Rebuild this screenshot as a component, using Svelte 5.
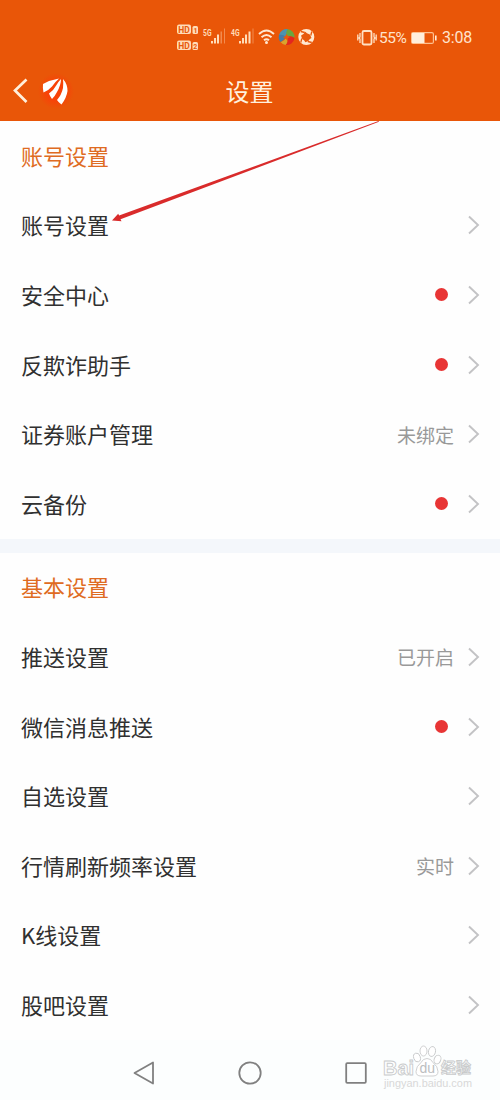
<script lang="ts">
    interface Row {
        label: string;
        value?: string;
        dot?: boolean;
    }

    interface Section {
        title: string;
        rows: Row[];
    }

    const sections: Section[] = [
        {
            title: "账号设置",
            rows: [
                { label: "账号设置" },
                { label: "安全中心", dot: true },
                { label: "反欺诈助手", dot: true },
                { label: "证券账户管理", value: "未绑定" },
                { label: "云备份", dot: true },
            ],
        },
        {
            title: "基本设置",
            rows: [
                { label: "推送设置", value: "已开启" },
                { label: "微信消息推送", dot: true },
                { label: "自选设置" },
                { label: "行情刷新频率设置", value: "实时" },
                { label: "K线设置" },
                { label: "股吧设置" },
            ],
        },
    ];
</script>

<div class="screen">
    <header>
        <div class="status">
            <svg class="signals" width="150" height="34" viewBox="0 0 150 34">
                <g fill="#ffdcb8">
                    <rect x="2" y="4.500" width="14" height="9.500" rx="2" />
                    <rect x="2" y="20.500" width="14" height="9.500" rx="2" />
                    <rect x="17.500" y="6" width="5.500" height="8" rx="1.500" />
                    <rect x="17.500" y="22" width="5.500" height="8" rx="1.500" />
                    <text x="28" y="15.500" font-size="9" textLength="8.500" lengthAdjust="spacingAndGlyphs">5G</text>
                    <text x="56" y="15.500" font-size="9" textLength="8.500" lengthAdjust="spacingAndGlyphs">4G</text>
                    <path d="M36 21h2v2.500h-2zM39 18h2v5.500h-2zM42 14.500h2v9h-2zM64 21h2v2.500h-2zM67 18h2v5.500h-2zM70 14.500h2v9h-2zM73.500 11.500h2v12h-2z" />
                    <path opacity=".4" d="M45.500 11.500h1.500v12h-1.500zM49 8.500h1v15h-1zM77.500 8.500h1v15h-1z" />
                </g>
                <g fill="#e8590c">
                    <text x="3.200" y="12.500" font-size="9" textLength="11.500" lengthAdjust="spacingAndGlyphs">HD</text>
                    <text x="3.200" y="28.500" font-size="9" textLength="11.500" lengthAdjust="spacingAndGlyphs">HD</text>
                    <text x="18.500" y="12.600" font-size="7">1</text>
                    <text x="18.300" y="28.600" font-size="7">2</text>
                </g>
                <g fill="none" stroke="#ffe8d2" stroke-width="1.900">
                    <path d="M84 14q7.500-7 15 0M86.500 17.300q5-4.600 10 0M89 20.300q2.500-2.200 5 0" />
                </g>
                <circle cx="91.500" cy="22.500" r="1.500" fill="#ffe8d2" />
                <g transform="translate(111.500 17)">
                    <path fill="#4a93b0" d="M0 0 -7.500-2A8 8 0 0 1 1-8Q4-4 0 0" />
                    <path fill="#6aa63f" d="M0 0Q-1-5 1-8A8 8 0 0 1 8 1Q4-2 0 0" />
                    <path fill="#e32620" d="M0 0Q5-2 8 1A8 8 0 0 1-1 8Q3 4 0 0" />
                    <path fill="#d9a42e" d="M0 0Q2 5-1 8A8 8 0 0 1-6 5Q-2 4 0 0" />
                    <path fill="#447ca8" d="M0 0Q-4 4-6 5A8 8 0 0 1-7.500-2Q-4-3 0 0" />
                    <path fill="#e8590c" d="M0-3Q1.500 0 3.500 0 1 1 .5 3 -1 1-3.500.5-1-.5 0-3" />
                </g>
                <g transform="translate(131.300 17)">
                    <circle r="8" fill="#ffe9d2" />
                    <path fill="#e8590c" d="M-1-5.200Q0-3.500 3.500-2.500Q4.500-1 5.200 1Q3.500 1.500 2 4Q0 5 -1 5.300Q-1.500 3.500-4 2Q-5-.5-5.200-1.500Q-3-2-1-5.200" />
                    <path fill="none" stroke="#e8590c" stroke-width="1.300" d="M-1.500-4.500-5.500-5.500M4.500-1.500 5.500-5.500M1.500 4.500 5.500 5.500M-4.500 1.500-5.500 5.500" />
                </g>
            </svg>
            <div class="power">
                <svg width="20" height="18" viewBox="0 0 20 18" fill="none" stroke="#ffe1c4">
                    <rect x="5.500" y="2" width="9" height="13.500" rx="1.500" stroke-width="1.800" />
                    <path stroke-width="1.300" d="M3 4v4l-1 1 1 1v4M17 4v4l1 1-1 1v4M.8 5.500v6M19.200 5.500v6" />
                </svg>
                <span class="percent">55%</span>
                <svg class="battery" width="26" height="12" viewBox="0 0 26 12">
                    <rect x=".6" y=".6" width="21.800" height="10.800" rx="1.500" fill="none" stroke="#ffc08f" stroke-width="1.200" />
                    <path fill="#ffeedc" d="M1 1h12.500v10H1zM24 3.500h1.600v5H24z" />
                </svg>
                <span class="clock">3:08</span>
            </div>
        </div>
        <div class="titlebar">
            <div class="left">
                <svg width="15" height="26" viewBox="0 0 15 26">
                    <path d="M13.500 1.500 2 12.500l11.500 11.500" fill="none" stroke="#fff0dc" stroke-width="2.700" />
                </svg>
                <svg class="logo" width="36" height="36" viewBox="0 0 36 36">
                    <defs>
                        <radialGradient id="logo-glow">
                            <stop offset=".5" stop-color="#f84208" />
                            <stop offset="1" stop-color="#f84208" stop-opacity="0" />
                        </radialGradient>
                    </defs>
                    <rect width="36" height="36" fill="url(#logo-glow)" />
                    <g fill="#fff">
                        <path d="M5 11Q12 7 21 5.500Q17 9 14 13.500Q11 17 5.500 19.500Q4.500 15 5 11Z" />
                        <path d="M23 6Q23 12 19 19Q17 23 14 26Q12 23.500 11 20.500Q15.500 17.500 18.500 12Q20.500 8.500 23 6Z" />
                        <path d="M25 6Q29.500 11 29.500 18Q28.500 25 23.500 31.500Q20.500 29.500 19 27Q23.500 22 25 15Q25.500 10 25 6Z" />
                    </g>
                </svg>
            </div>
            <h1>设置</h1>
        </div>
    </header>

    <main>
        {#each sections as { title, rows }}
            <section>
                <h2>{title}</h2>
                {#each rows as { label, value, dot }}
                    <div class="row">
                        <span class="label">{label}</span>
                        <div class="extra">
                            {#if value}
                                <span class="value">{value}</span>
                            {/if}
                            {#if dot}
                                <i class="dot"></i>
                            {/if}
                            <svg width="13" height="20" viewBox="0 0 13 20">
                                <path d="m2 1.500 9 8.500-9 8.500" fill="none" stroke="#c3c3c5" stroke-width="1.900" />
                            </svg>
                        </div>
                    </div>
                {/each}
            </section>
        {/each}
    </main>

    <nav>
        <svg width="22" height="24" viewBox="0 0 22 24">
            <path d="M20 1.500v21L1.500 12Z" />
        </svg>
        <svg width="24" height="24" viewBox="0 0 24 24">
            <circle cx="12" cy="12" r="10.700" />
        </svg>
        <svg width="22" height="22" viewBox="0 0 22 22">
            <rect x="1.200" y="1.200" width="19.600" height="19.600" rx="1" />
        </svg>
    </nav>

    <svg class="pointer" width="268" height="102" viewBox="0 0 268 102">
        <path fill="#d92b2b" d="M266.500 0 267 .8 8.500 98.200 9.500 100.200 0 99.500 6.200 92.700 7.100 94.600Z" />
    </svg>

    <svg class="watermark" width="100" height="50" viewBox="0 0 100 50">
        <g fill="#fff" stroke="#c9cbcc" stroke-width=".9">
            <ellipse cx="41" cy="16.500" rx="3.300" ry="4.500" transform="rotate(-18 41 16.500)" />
            <ellipse cx="47.500" cy="10" rx="3.500" ry="5" />
            <ellipse cx="56" cy="10.500" rx="3.500" ry="5" transform="rotate(12 56 10.500)" />
            <ellipse cx="61.500" cy="18.500" rx="3.300" ry="4.500" transform="rotate(22 61.500 18.500)" />
            <path d="M51 17.500q4 0 6 4 5 4 5 9 0 4.500-5 4.500H45q-5 0-5-4.500 0-5 5-9 2-4 6-4Z" />
            <text class="brand" x="7" y="33.500" textLength="31" lengthAdjust="spacingAndGlyphs">Bai</text>
            <text class="cn" x="65" y="32">经验</text>
        </g>
        <text class="du" x="43.500" y="31.500">du</text>
        <text class="url" x="8" y="45.500" textLength="88" lengthAdjust="spacingAndGlyphs">jingyan.baidu.com</text>
    </svg>
</div>

<style>
    :global(body) {
        margin: 0;
    }

    .screen {
        position: relative;
        display: flex;
        flex-direction: column;
        width: 500px;
        height: 1100px;
        overflow: hidden;
        background: #fefefe;
        color: #303030;
        font-family: "Noto Sans CJK SC", sans-serif;
    }

    header {
        height: 121px;
        background: #e95608;
    }

    .status {
        display: flex;
        align-items: center;
        justify-content: space-between;
        box-sizing: border-box;
        height: 61px;
        padding: 13px 27px 0 175px;
    }
    .signals {
        font-family: Roboto, sans-serif;
        font-weight: 700;
    }
    .power {
        display: flex;
        align-items: center;
        padding-top: 1px;
        color: #ffe3cc;
        font-family: Roboto, sans-serif;
        font-size: 16px;
        line-height: 20px;
    }
    .percent {
        width: 28px;
        margin-left: 2px;
        font-size: 15.500px;
        letter-spacing: -0.500px;
    }
    .battery {
        margin: 0 5px 0 4px;
    }
    .clock {
        width: 31px;
        letter-spacing: -0.200px;
    }

    .titlebar {
        display: grid;
        grid-template-columns: 1fr auto 1fr;
        align-items: center;
        height: 60px;
    }
    .left {
        display: flex;
        align-items: center;
        padding-left: 13px;
    }
    .logo {
        margin-left: 10px;
    }
    h1 {
        margin: 0;
        padding: 0 1px 1px 0;
        color: #fff1df;
        font-size: 24px;
        font-weight: 400;
        line-height: 36px;
    }

    section + section {
        border-top: 14px solid #f4f7fb;
    }

    h2,
    .row {
        display: flex;
        align-items: center;
        box-sizing: border-box;
        height: 69.600px;
        margin: 0;
        padding: 0 20px 0 21px;
        font-size: 22px;
        font-weight: 400;
    }
    h2 {
        padding-bottom: 2px;
        color: #df6b22;
    }
    .row {
        justify-content: space-between;
    }
    .label {
        padding-bottom: 2px;
    }
    .extra {
        display: flex;
        align-items: center;
    }
    .extra svg {
        margin-left: 13px;
    }
    .value {
        color: #999;
        font-size: 19px;
    }
    .dot {
        width: 13px;
        height: 13px;
        margin-right: 6px;
        border-radius: 50%;
        background: #e83535;
    }

    nav {
        display: flex;
        flex: 1;
        align-items: center;
        justify-content: space-between;
        padding: 6px 133px 0;
        background: #fcfefe;
    }
    nav svg {
        fill: none;
        stroke: #808080;
        stroke-width: 1.800;
        stroke-linejoin: round;
    }

    .pointer {
        position: absolute;
        top: 121px;
        left: 112px;
    }

    .watermark {
        position: absolute;
        top: 1041px;
        left: 376px;
        font-family: "Liberation Sans", sans-serif;
    }
    .brand {
        font-size: 20px;
        font-weight: 700;
    }
    .du {
        fill: #bcbebf;
        font-size: 14px;
    }
    .cn {
        font-family: "Noto Sans CJK SC", sans-serif;
        font-size: 15px;
        font-weight: 700;
    }
    .url {
        fill: #d8d8d8;
        font-size: 10.500px;
    }
</style>
